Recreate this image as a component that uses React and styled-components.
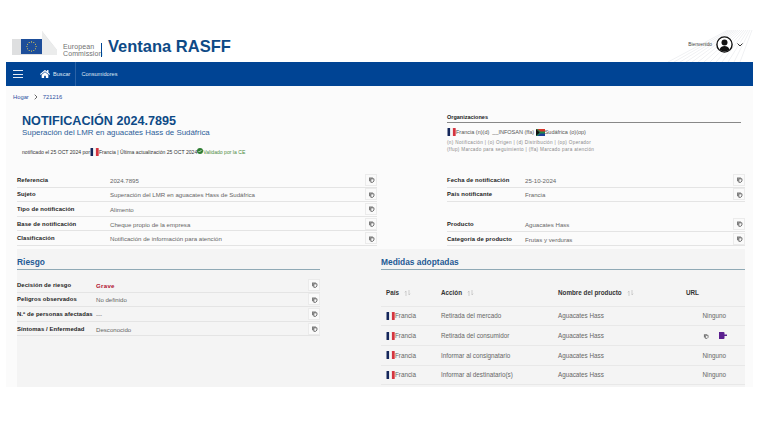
import React from "react";
import styled, { createGlobalStyle } from "styled-components";
import { FaHome } from "react-icons/fa";

const Global = createGlobalStyle`
  html, body { margin: 0; padding: 0; background: #fff; }
  body { font-family: "Liberation Sans", Arial, sans-serif; color: #333; }
  * { box-sizing: border-box; }
`;

const Page = styled.div`
  width: 747px;
  margin-left: 6px;
  padding-top: 30px;
`;
const Header = styled.header`
  height: 32px;
  display: flex;
  align-items: center;
  justify-content: space-between;
  padding: 0 10px 0 6px;
  position: relative;
`;
const Brand = styled.div`
  display: flex;
  align-items: center;
`;
const LogoWrap = styled.div`
  display: flex;
  margin-top: -5px;
`;
const EcText = styled.div`
  margin: 7px 0 0 4px;
  font-size: 7px;
  line-height: 7px;
  color: #707070;
  letter-spacing: 0.1px;
  width: 38px;
`;
const Sep = styled.div`
  width: 1px;
  height: 14px;
  margin: 8px 0 0 0;
  background: #004494;
`;
const AppName = styled.div`
  margin: 1px 0 0 6px;
  font-size: 16.5px;
  font-weight: 700;
  color: #0e4a86;
  white-space: nowrap;
`;
const User = styled.div`
  display: flex;
  align-items: center;
  font-size: 4.8px;
  color: #444;
  gap: 4px;
  margin-top: -3px;
  position: relative;
  z-index: 1;
`;
const Lines = styled.svg`
  position: absolute;
  right: 0;
  top: 0;
`;
const Nav = styled.nav`
  height: 24px;
  background: #004494;
  display: flex;
  align-items: center;
  color: #dfe8f3;
  font-size: 5.6px;
  padding-left: 7px;
`;
const Burger = styled.div`
  width: 10px;
  height: 8px;
  margin-right: 17px;
  border-top: 1px solid #e6ecf4;
  border-bottom: 1px solid #e6ecf4;
  position: relative;
  &::after {
    content: "";
    position: absolute;
    left: 0;
    right: 0;
    top: 2.5px;
    height: 1px;
    background: #e6ecf4;
  }
`;
const NavItem = styled.div`
  display: flex;
  align-items: center;
  height: 24px;
  gap: 3px;
  padding-right: 5px;
  border-right: ${p => (p.$div ? "1px solid #2a62a6" : "none")};
  margin-right: 5px;
  white-space: nowrap;
`;
const Body = styled.main`
  height: 301px;
  background: #fbfbfb;
  display: flex;
  flex-direction: column;
`;
const Crumbs = styled.div`
  display: flex;
  align-items: center;
  gap: 5px;
  height: 21px;
  padding: 0 0 0 7px;
  font-size: 5.8px;
  color: #2b4f9e;
`;
const Top = styled.div`
  display: flex;
  padding-left: 16px;
  height: 61px;
`;
const TitleCol = styled.div`
  width: 425px;
  padding-top: 7px;
`;
const Title = styled.h1`
  margin: 0;
  font-size: 12.6px;
  line-height: 14px;
  font-weight: 700;
  color: #0e4a86;
`;
const Subtitle = styled.div`
  font-size: 7.9px;
  line-height: 9px;
  color: #2c6099;
  white-space: nowrap;
`;
const Meta = styled.div`
  display: flex;
  align-items: center;
  margin-top: 11px;
  font-size: 5.1px;
  color: #333;
  white-space: nowrap;
`;
const Valid = styled.span`
  color: #4a8a3c;
  display: flex;
  align-items: center;
`;
const Org = styled.div`
  width: 294px;
  padding-top: 7px;
`;
const OrgTitle = styled.div`
  font-size: 5.5px;
  font-weight: 700;
  color: #222;
  padding-bottom: 1px;
  line-height: 7px;
  border-bottom: 1px solid #888;
`;
const OrgRow = styled.div`
  display: flex;
  align-items: center;
  margin-top: 5px;
  font-size: 5.5px;
  color: #555;
  height: 8px;
  white-space: nowrap;
`;
const Legend = styled.div`
  margin-top: 3px;
  font-size: 4.7px;
  line-height: 7px;
  letter-spacing: 0.3px;
  color: #8a8a8a;
  white-space: nowrap;
`;
const Details = styled.div`
  display: flex;
  padding-left: 11px;
  height: 78px;
`;
const LeftCol = styled.div`
  width: 360px;
  padding-top: 5px;
`;
const RightCol = styled.div`
  width: 298px;
  margin-left: 70px;
  padding-top: 5px;
`;
const Row = styled.div`
  display: grid;
  grid-template-columns: ${p => p.$label}px 1fr 12px;
  align-items: center;
  height: 14.6px;
  border-bottom: 1px solid #e4e4e4;
  font-size: 6.1px;
  margin-top: ${p => p.$gap || 0}px;
`;
const Label = styled.div`
  font-weight: 700;
  font-size: 5.9px;
  color: #222;
  letter-spacing: 0.1px;
  white-space: nowrap;
`;
const Value = styled.div`
  color: ${p => (p.$danger ? "#b01030" : "#666")};
  font-weight: ${p => (p.$danger ? 700 : 400)};
  letter-spacing: ${p => (p.$danger ? "0.3px" : 0)};
  white-space: nowrap;
  padding-top: 1px;
`;
const CopyBtn = styled.div`
  width: 12px;
  height: 12px;
  border: 1px solid #ebebeb;
  background: #fafafa;
  display: flex;
  align-items: center;
  justify-content: center;
`;
const Lower = styled.div`
  flex: 1;
  display: flex;
  margin: 3px 8px 0 11px;
  background: #f4f4f4;
`;
const Risk = styled.section`
  width: 303px;
`;
const Measures = styled.section`
  width: 364px;
  margin-left: 61px;
`;
const SectionTitle = styled.h2`
  margin: 0;
  height: 21px;
  padding-top: 8px;
  font-size: 8.4px;
  line-height: 10px;
  color: #1f5a94;
  font-weight: 700;
  border-bottom: 1px solid #8fa9b5;
`;
const RiskRows = styled.div`
  padding-top: 8px;
`;
const Table = styled.table`
  width: 100%;
  border-collapse: collapse;
  table-layout: fixed;
  margin-top: 14px;
  font-size: 6.3px;
  color: #666;
`;
const Th = styled.th`
  height: 22px;
  text-align: left;
  font-weight: 700;
  color: #333;
  padding-left: 5px;
  padding-bottom: 5px;
  border-bottom: 1px solid #e8e8e8;
  width: ${p => p.$w}px;
  white-space: nowrap;
`;
const Tr = styled.tr`
  height: 19.7px;
  border-bottom: 1px solid #e8e8e8;
`;
const Td = styled.td`
  padding: 0 0 0 5px;
  text-align: ${p => (p.$right ? "right" : "left")};
  padding-right: ${p => (p.$right ? "19px" : "0")};
  white-space: nowrap;
`;
const FlagCell = styled.div`
  display: flex;
  align-items: center;
`;
const UrlIcons = styled.div`
  display: flex;
  justify-content: flex-end;
  align-items: center;
  gap: 9px;
  margin-right: -1px;
`;

const CopyIcon = ({ s = 7 }) => (
  <svg width={s} height={s} viewBox="0 0 10 10">
    <path d="M1.5 2h5.5v1.5H3.5v4H1.5z" fill="#777" />
    <path d="M4 4h4.5v3.2L6.8 9H4z" fill="none" stroke="#666" strokeWidth="1.3" />
  </svg>
);
const SortIcon = () => (
  <svg width="7" height="6" viewBox="0 0 7 6" style={{ marginLeft: 5, verticalAlign: -0.5 }}>
    <path d="M2 6V1M2 1L.8 2.3M5 0v5M5 5l1.2-1.3" stroke="#bbb" strokeWidth=".7" fill="none" />
  </svg>
);
const France = () => (
  <svg width="9" height="8" viewBox="0 0 9 8" style={{ flexShrink: 0 }}>
    <rect x=".5" width="2.8" height="8" rx=".5" fill="#14265a" />
    <rect x="3.3" width="2.6" height="8" fill="#f6f6f6" />
    <rect x="5.9" width="2.8" height="8" rx=".5" fill="#d5343f" />
  </svg>
);
const SouthAfrica = () => (
  <svg width="9" height="7" viewBox="0 0 9 7" style={{ flexShrink: 0 }}>
    <rect width="9" height="3.5" fill="#d8352a" />
    <rect y="3.5" width="9" height="3.5" fill="#1d3f99" />
    <path d="M0 0l4 3.5L0 7z" fill="#111" />
    <path d="M0 0h1.5l3 2.6H9v1.8H4.5L1.5 7H0l4-3.5z" fill="#1f8a4c" />
  </svg>
);
const Check = () => (
  <svg width="6" height="6" viewBox="0 0 6 6" style={{ marginTop: -2 }}>
    <circle cx="3" cy="3" r="3" fill="#2e7d32" />
    <path d="M1.5 3l1 1 2-2" stroke="#fff" strokeWidth=".7" fill="none" />
  </svg>
);
const EcLogo = () => {
  const stars = Array.from({ length: 12 }, (_, i) => {
    const a = (i * Math.PI) / 6;
    return <circle key={i} cx={19.5 + 4.6 * Math.cos(a)} cy={15.5 + 4.6 * Math.sin(a)} r=".55" fill="#f5d84a" />;
  });
  return (
    <svg width="47" height="25" viewBox="0 0 47 25">
      <path d="M0 8h30V0l15 19v5H0z" fill="#dedfe0" />
      <path d="M30 0l5 7 10 12v5H30z" fill="#ebecec" />
      <rect x="9" y="8" width="21" height="15" fill="#1d4e9a" />
      {stars}
    </svg>
  );
};
const UserIcon = () => (
  <svg width="17" height="17" viewBox="0 0 17 17">
    <circle cx="8.500" cy="8.500" r="7.600" fill="#fff" stroke="#111" strokeWidth="1.400" />
    <circle cx="8.500" cy="6.500" r="3" fill="#111" />
    <path d="M3.500 13.500c1-3 3-3.600 5-3.600s4 .6 5 3.600c-1.300 1.300-3 2-5 2s-3.700-.7-5-2z" fill="#111" />
  </svg>
);
const Chevron = () => (
  <svg width="6" height="4" viewBox="0 0 6 4">
    <path d="M.5.5L3 3 5.500.5" stroke="#222" strokeWidth=".9" fill="none" />
  </svg>
);
const PurpleIcon = () => (
  <svg width="9" height="7" viewBox="0 0 9 7">
    <path d="M1 0h4.500a1 1 0 0 1 1 1v1.500H9v1.500H6.500V6a1 1 0 0 1-1 1H1z" fill="#5b1f8f" />
  </svg>
);
const Crumb = () => (
  <svg width="4" height="6" viewBox="0 0 4 6">
    <path d="M.7.7L3 3 .7 5.300" stroke="#444" strokeWidth=".8" fill="none" />
  </svg>
);
const Deco = () => (
  <Lines width="85" height="32" viewBox="0 0 85 32">
    {Array.from({ length: 13 }, (_, i) => (
      <path key={i} d={`M${i * 6} 32L${60 + i * 2} 0`} stroke="#f0f1f3" strokeWidth="1" />
    ))}
  </Lines>
);

const D = ({ label, value, w, danger, gap }) => (
  <Row $label={w} $gap={gap}>
    <Label>{label}</Label>
    <Value $danger={danger}>{value}</Value>
    <CopyBtn><CopyIcon /></CopyBtn>
  </Row>
);

const actions = [
  ["Retirada del mercado", "Ninguno"],
  ["Retirada del consumidor", null],
  ["Informar al consignatario", "Ninguno"],
  ["Informar al destinatario(s)", "Ninguno"],
];

export default function App() {
  return (
    <Page>
      <Global />
      <Header>
        <Deco />
        <Brand>
          <LogoWrap><EcLogo /></LogoWrap>
          <EcText>European Commission</EcText>
          <Sep />
          <AppName>Ventana RASFF</AppName>
        </Brand>
        <User>
          Bienvenido
          <UserIcon />
          <Chevron />
        </User>
      </Header>
      <Nav>
        <Burger />
        <NavItem $div>
          <FaHome size={10} color="#fff" />
          Buscar
        </NavItem>
        <NavItem>Consumidores</NavItem>
      </Nav>
      <Body>
        <Crumbs>
          <span>Hogar</span>
          <Crumb />
          <span>721216</span>
        </Crumbs>
        <Top>
          <TitleCol>
            <Title>NOTIFICACIÓN 2024.7895</Title>
            <Subtitle>Superación del LMR en aguacates Hass de Sudáfrica</Subtitle>
            <Meta>
              notificado el 25 OCT 2024 por
              <France />
              Francia | Última actualización 25 OCT 2024
              <Valid><Check />Validado por la CE</Valid>
            </Meta>
          </TitleCol>
          <Org>
            <OrgTitle>Organizaciones</OrgTitle>
            <OrgRow>
              <France />Francia (n)(d)&nbsp;&nbsp;__INFOSAN (ffa)&nbsp;<SouthAfrica />Sudáfrica (o)(op)
            </OrgRow>
            <Legend>
              (n) Notificación | (o) Origen | (d) Distribución | (op) Operador<br />
              (ffup) Marcado para seguimiento | (ffa) Marcado para atención
            </Legend>
          </Org>
        </Top>
        <Details>
          <LeftCol>
            <D w={93} label="Referencia" value="2024.7895" />
            <D w={93} label="Sujeto" value="Superación del LMR en aguacates Hass de Sudáfrica" />
            <D w={93} label="Tipo de notificación" value="Alimento" />
            <D w={93} label="Base de notificación" value="Cheque propio de la empresa" />
            <D w={93} label="Clasificación" value="Notificación de información para atención" />
          </LeftCol>
          <RightCol>
            <D w={78} label="Fecha de notificación" value="25-10-2024" />
            <D w={78} label="País notificante" value="Francia" />
            <D w={78} gap={15} label="Producto" value="Aguacates Hass" />
            <D w={78} label="Categoría de producto" value="Frutas y verduras" />
          </RightCol>
        </Details>
        <Lower>
          <Risk>
            <SectionTitle>Riesgo</SectionTitle>
            <RiskRows>
              <D w={79} label="Decisión de riesgo" value="Grave" danger />
              <D w={79} label="Peligros observados" value="No definido" />
              <D w={79} label="N.º de personas afectadas" value="---" />
              <D w={79} label="Síntomas / Enfermedad" value="Desconocido" />
            </RiskRows>
          </Risk>
          <Measures>
            <SectionTitle>Medidas adoptadas</SectionTitle>
            <Table>
              <thead>
                <tr>
                  <Th $w={55}>País<SortIcon /></Th>
                  <Th $w={117}>Acción<SortIcon /></Th>
                  <Th $w={128}>Nombre del producto<SortIcon /></Th>
                  <Th>URL</Th>
                </tr>
              </thead>
              <tbody>
                {actions.map(([a, url]) => (
                  <Tr key={a}>
                    <Td><FlagCell><France />Francia</FlagCell></Td>
                    <Td>{a}</Td>
                    <Td>Aguacates Hass</Td>
                    <Td $right>
                      {url || <UrlIcons><CopyIcon s={6} /><PurpleIcon /></UrlIcons>}
                    </Td>
                  </Tr>
                ))}
              </tbody>
            </Table>
          </Measures>
        </Lower>
      </Body>
    </Page>
  );
}
